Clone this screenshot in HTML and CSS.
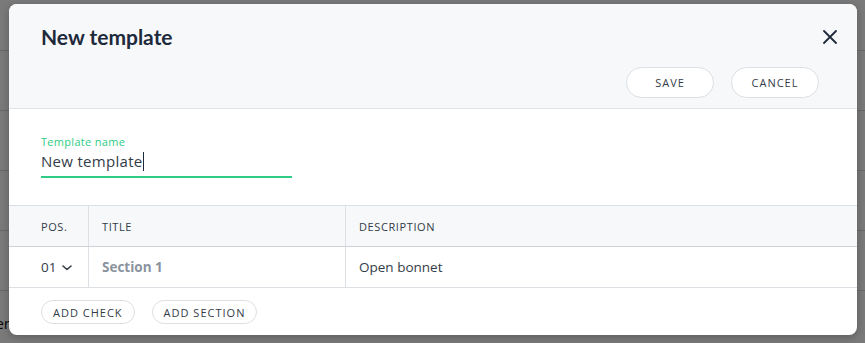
FILE: index.html
```html
<!DOCTYPE html>
<html lang="en">
<head>
    <meta charset="UTF-8">
    <meta name="viewport" content="width=device-width, initial-scale=1.0">
    <title>New template</title>
    <link rel="stylesheet" href="styles.css">
</head>
<body>
    <div id="page">
        <div class="page-bar"></div>
        <div class="page-row"></div>
        <div class="page-row"></div>
        <div class="page-row"></div>
        <div class="page-row"></div>
        <div class="page-row page-text"><span>er</span></div>
    </div>

    <div id="backdrop"></div>

    <div id="modal">
        <div class="modal-header">
            <div class="header-top">
                <h1 class="modal-title">New template</h1>
                <button class="close-btn" aria-label="Close">
                    <svg width="14" height="14" viewBox="0 0 14 14">
                        <path d="M1 1 L13 13 M13 1 L1 13" stroke="#1e2a3b" stroke-width="1.8" stroke-linecap="round" fill="none"/>
                    </svg>
                </button>
            </div>
            <div class="header-actions">
                <button class="pill-btn big">Save</button>
                <button class="pill-btn big">Cancel</button>
            </div>
        </div>

        <div class="form">
            <label class="field-label">Template name</label>
            <div class="field-input">New template<span class="caret"></span></div>
        </div>

        <div class="table">
            <div class="table-row table-head">
                <div class="cell col-pos">Pos.</div>
                <div class="cell col-title">Title</div>
                <div class="cell col-desc">Description</div>
            </div>
            <div class="table-row">
                <div class="cell col-pos">01
                    <svg class="chevron" width="10" height="6" viewBox="0 0 10 6">
                        <path d="M1 1 L5 4.5 L9 1" stroke="#333c48" stroke-width="1.6" fill="none" stroke-linecap="round" stroke-linejoin="round"/>
                    </svg>
                </div>
                <div class="cell col-title section-name">Section 1</div>
                <div class="cell col-desc">Open bonnet</div>
            </div>
        </div>

        <div class="footer">
            <button class="pill-btn small">Add check</button>
            <button class="pill-btn small">Add section</button>
        </div>
    </div>
</body>
</html>
```

FILE: styles.css
```css
body {
    margin: 0;
    height: 343px;
    overflow: hidden;
    font-family: "Open Sans", Arial, sans-serif;
    background-color: #f4f4f4;
}

#page {
    display: flex;
    flex-direction: column;
}

.page-bar {
    height: 50px;
    border-bottom: 1px solid #d0d0d0;
}

.page-row {
    height: 59px;
    border-bottom: 1px solid #d0d0d0;
}

.page-text {
    height: 40px;
    border-bottom: none;
    display: flex;
    align-items: center;
    width: 10px;
    justify-content: flex-end;
    overflow: hidden;
    font-size: 15px;
    color: #111;
}

.page-text span {
    white-space: nowrap;
    margin-top: 24px;
}

#backdrop {
    position: absolute;
    inset: 0;
    background-color: rgba(0, 0, 0, 0.5);
}

#modal {
    position: absolute;
    top: 4px;
    left: 9px;
    width: 848px;
    height: 331px;
    background-color: #ffffff;
    border-radius: 8px;
    overflow: hidden;
    display: flex;
    flex-direction: column;
    box-shadow: 0 2px 8px rgba(0, 0, 0, 0.25);
}

.modal-header {
    background-color: #f6f8fa;
    border-bottom: 1px solid #e1e5ea;
    height: 105px;
    box-sizing: border-box;
    padding: 19px 20px 0 32px;
}

.header-top {
    display: flex;
    justify-content: space-between;
    align-items: center;
}

.modal-title {
    margin: 0;
    font-family: Lato, Arial, sans-serif;
    font-size: 21px;
    font-weight: 700;
    color: #1e2a3b;
    line-height: 28px;
}

.close-btn {
    background: none;
    border: none;
    padding: 0;
    width: 14px;
    height: 14px;
    display: flex;
    cursor: pointer;
}

.header-actions {
    display: flex;
    justify-content: flex-end;
    gap: 17px;
    margin-top: 16px;
    padding-right: 18px;
}

.pill-btn {
    font-family: "Open Sans", Arial, sans-serif;
    background-color: #ffffff;
    border: 1px solid #dcdfe3;
    border-radius: 20px;
    color: #333c48;
    text-transform: uppercase;
    letter-spacing: 1px;
    cursor: pointer;
    padding: 0;
}

.pill-btn.big {
    width: 88px;
    height: 31px;
    font-size: 11px;
}

.pill-btn.small {
    height: 24px;
    font-size: 11px;
    padding: 0 11px;
}

.form {
    height: 96px;
    box-sizing: border-box;
    padding: 26px 0 0 32px;
}

.field-label {
    display: block;
    font-size: 11px;
    line-height: 14px;
    letter-spacing: 0.3px;
    color: #2ecc85;
}

.field-input {
    width: 251px;
    font-size: 15px;
    line-height: 20px;
    letter-spacing: 0.3px;
    padding-top: 2px;
    padding-bottom: 5px;
    color: #333c48;
    border-bottom: 2px solid #2ecc85;
    display: flex;
    align-items: center;
}

.caret {
    display: inline-block;
    width: 1px;
    height: 19px;
    background-color: #1e2a3b;
}

.table {
    border-top: 1px solid #dcdfe3;
}

.table-row {
    display: flex;
    height: 40px;
    border-bottom: 1px solid #dcdfe3;
}

.table-head {
    background-color: #f6f8fa;
    border-bottom-color: #cfd3d8;
}

.table-head .cell {
    font-size: 11px;
    text-transform: uppercase;
    color: #333c48;
    letter-spacing: 0.6px;
}

.cell {
    display: flex;
    align-items: center;
    box-sizing: border-box;
    font-size: 13.5px;
    color: #333c48;
    padding-left: 13px;
}

.col-pos {
    width: 80px;
    padding-left: 32px;
    border-right: 1px solid #dcdfe3;
    gap: 6px;
}

.col-title {
    width: 257px;
    border-right: 1px solid #dcdfe3;
}

.col-desc {
    flex: 1;
}

.section-name {
    font-weight: 700;
    color: #8a939e;
}

.chevron {
    margin-top: 2px;
}

.footer {
    display: flex;
    gap: 17px;
    padding: 12px 0 0 32px;
}
```
